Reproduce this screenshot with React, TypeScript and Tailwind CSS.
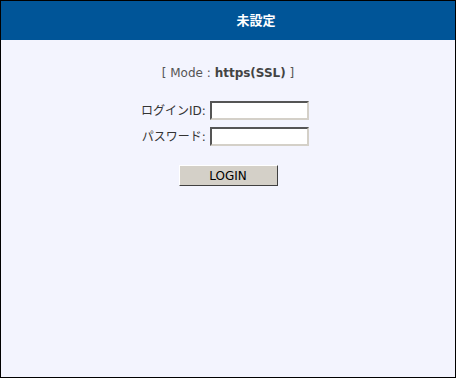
export default function App() {
  return (
    <div className="w-[456px] h-[378px] border border-black bg-[#f3f4fe] flex flex-col font-['DejaVu_Sans','Noto_Sans_CJK_JP',sans-serif]">
      <header className="h-[39px] bg-[#005598] flex items-center justify-center pl-[56px]">
        <h1 className="text-white text-[13px] font-bold">未設定</h1>
      </header>
      <div className="flex flex-col items-center">
        <p className="mt-[25px] text-[12px] text-[#555] leading-[16px]">
          [ Mode : <b className="text-[#444]">https(SSL)</b> ]
        </p>
        <div className="mt-[20px] grid grid-cols-[auto_99px] gap-x-[4px] gap-y-[7px] items-center ml-[-6px]">
          <label className="text-right text-[12px] text-[#333]">ログインID:</label>
          <input className="h-[19px] w-[99px] bg-white border-2 border-t-[#555] border-l-[#555] border-b-[#d4d0c8] border-r-[#d4d0c8]" />
          <label className="text-right text-[12px] text-[#333]">パスワード:</label>
          <input type="password" className="h-[19px] w-[99px] bg-white border-2 border-t-[#555] border-l-[#555] border-b-[#d4d0c8] border-r-[#d4d0c8]" />
        </div>
        <button className="mt-[19px] w-[99px] h-[21px] bg-[#d4d0c8] border border-t-white border-l-white border-b-[#404040] border-r-[#404040] text-[12px] text-black leading-none">
          LOGIN
        </button>
      </div>
    </div>
  );
}
